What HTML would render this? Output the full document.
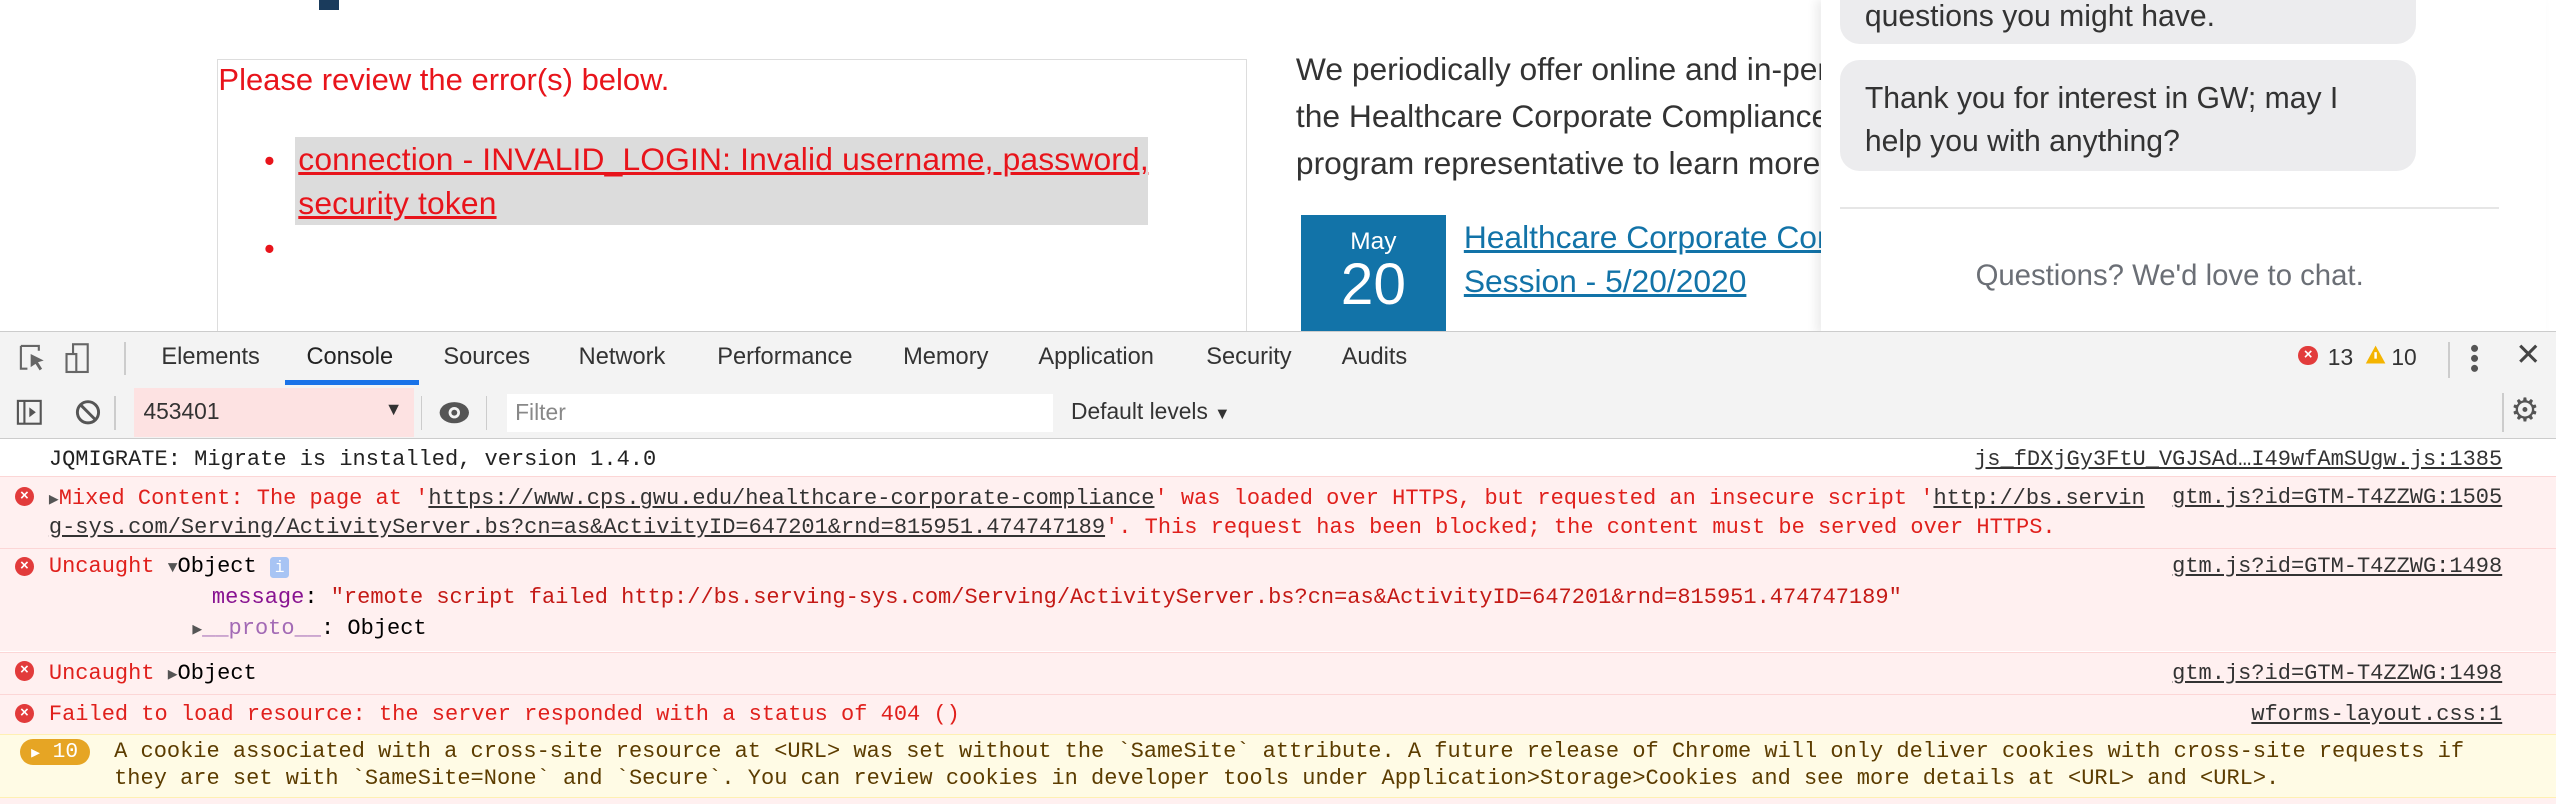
<!DOCTYPE html>
<html><head><meta charset="utf-8"><style>
html,body{margin:0;padding:0;width:2556px;height:804px;overflow:hidden;background:#fff}
#w{zoom:1.6301;width:1568px;height:493px;position:relative;overflow:hidden;font-family:"Liberation Sans",sans-serif}
.a{position:absolute;white-space:nowrap}
.m{font-family:"Liberation Mono",monospace;font-size:13.5px}
.tab{position:absolute;top:211px;font-size:14.5px;color:#333}
.row{position:absolute;left:0;width:1568px;background:#fff0f0;border-top:1px solid #fcd6d6}
.ei{position:absolute;left:9px;width:12px;height:12px;border-radius:50%;background:#e23b3b;color:#fff;font-size:9px;line-height:12px;text-align:center;font-family:"Liberation Sans",sans-serif;font-weight:bold}
.red{color:#e0201c}
.lnk{position:absolute;right:33px;color:#333;text-decoration:underline}
</style></head><body><div id="w">
<div class="a" style="left:196px;top:0;width:12px;height:6px;background:#1a3b5c"></div>
<div class="a" style="left:133px;top:36px;width:631px;height:170px;border:1px solid #ddd;border-bottom:none"></div>
<div class="a" style="left:134px;top:38px;font-size:19px;color:#e8141b">Please review the error(s) below.</div>
<div class="a" style="left:181px;top:84px;width:523px;height:54px;background:#dcdcdc"></div>
<div class="a" style="left:162px;top:86px;font-size:18.5px;color:#e8141b;line-height:27px">•<br><br>•</div>
<div class="a" style="left:183px;top:84px;font-size:19.5px;color:#e8141b;line-height:27px;text-decoration:underline;letter-spacing:0.1px">connection - INVALID_LOGIN: Invalid username, password,<br>security token</div>
<div class="a" style="left:795px;top:28px;font-size:19.5px;color:#333;line-height:29px">We periodically offer online and in-person<br>the Healthcare Corporate Compliance<br>program representative to learn more</div>
<div class="a" style="left:798px;top:132px;width:89px;height:75px;background:#1273a8;color:#fff;text-align:center">
<div style="font-size:15px;margin-top:8px">May</div><div style="font-size:36px;line-height:36px">20</div></div>
<div class="a" style="left:898px;top:132px;font-size:19.5px;color:#1273a8;line-height:27px;text-decoration:underline">Healthcare Corporate Compliance<br>Session - 5/20/2020</div>
<div class="a" style="left:1117px;top:0;width:445px;height:205px;background:#fff;box-shadow:-3px 0 6px rgba(0,0,0,.08)">
<div class="a" style="left:12px;top:-20px;width:353px;height:47px;background:#ececee;border-radius:12px"></div>
<div class="a" style="left:27px;top:0px;font-size:18.5px;color:#333">questions you might have.</div>
<div class="a" style="left:12px;top:37px;width:353px;height:68px;background:#ececee;border-radius:12px"></div>
<div class="a" style="left:27px;top:48px;font-size:18.5px;color:#333;line-height:26px">Thank you for interest in GW; may I<br>help you with anything?</div>
<div class="a" style="left:12px;top:127px;width:404px;height:1px;background:#e6e6e6"></div>
<div class="a" style="left:0;width:428px;text-align:center;top:159px;font-size:18px;color:#6b6f76">Questions? We'd love to chat.</div>
</div>
<!-- devtools -->
<div class="a" style="left:0;top:203px;width:1568px;height:290px;background:#fff"></div>
<div class="a" style="left:0;top:203px;width:1568px;height:33px;background:#f3f3f3;border-top:1px solid #ccc;border-bottom:1px solid #ccc"></div>
<svg class="a" style="left:10px;top:209px" width="60" height="22" viewBox="0 0 60 22"><path d="M3 3h11v3M3 3v14h4" fill="none" stroke="#666" stroke-width="1.3"/><path d="M9 8l8 4-3.5 1 2.5 4-1.5 1-2.5-4-3 2z" fill="#666"/><rect x="35" y="2" width="9" height="17" fill="none" stroke="#666" stroke-width="1.3"/><rect x="31" y="8" width="6" height="11" fill="#f3f3f3" stroke="#666" stroke-width="1.3"/></svg>
<div class="a" style="left:76px;top:210px;width:1px;height:20px;background:#ccc"></div>
<div class="tab" style="left:99px">Elements</div>
<div class="tab" style="left:188px;color:#222">Console</div>
<div class="a" style="left:175px;top:233px;width:82px;height:3px;background:#1a73e8"></div>
<div class="tab" style="left:272px">Sources</div>
<div class="tab" style="left:355px">Network</div>
<div class="tab" style="left:440px">Performance</div>
<div class="tab" style="left:554px">Memory</div>
<div class="tab" style="left:637px">Application</div>
<div class="tab" style="left:740px">Security</div>
<div class="tab" style="left:823px">Audits</div>
<div class="ei" style="left:1410px;top:212px">×</div>
<div class="a" style="left:1428px;top:211px;font-size:14px;color:#333">13</div>
<svg class="a" style="left:1451px;top:211px" width="13" height="13"><path d="M6.5 1L12.5 12H.5z" fill="#f4b400"/><path d="M6.5 5v4" stroke="#fff" stroke-width="1.5"/></svg>
<div class="a" style="left:1467px;top:211px;font-size:14px;color:#333">10</div>
<div class="a" style="left:1502px;top:210px;width:1px;height:22px;background:#ccc"></div>
<div class="a" style="left:1515px;top:211px;width:4px;line-height:6px;font-size:10px;color:#555">●<br>●<br>●</div>
<div class="a" style="left:1543px;top:207px;font-size:19px;color:#444">✕</div>
<div class="a" style="left:0;top:237px;width:1568px;height:32px;background:#f3f3f3;border-bottom:1px solid #ccc"></div>
<svg class="a" style="left:8px;top:243px" width="60" height="20"><rect x="3" y="3" width="14" height="14" fill="none" stroke="#555" stroke-width="1.3"/><path d="M7 3v14" stroke="#555" stroke-width="1.3"/><path d="M10 7l4 3-4 3z" fill="#555"/><circle cx="46" cy="10" r="6.5" fill="none" stroke="#555" stroke-width="1.8"/><path d="M41.5 5.5l9 9" stroke="#555" stroke-width="1.8"/></svg>
<div class="a" style="left:70px;top:243px;width:1px;height:21px;background:#ccc"></div>
<div class="a" style="left:82px;top:238px;width:172px;height:30px;background:#fde2e2"></div>
<div class="a" style="left:88px;top:244px;font-size:14px;color:#333">453401</div>
<div class="a" style="left:236px;top:245px;font-size:11px;color:#333">▼</div>
<div class="a" style="left:258px;top:243px;width:1px;height:21px;background:#ccc"></div>
<svg class="a" style="left:269px;top:244px" width="20" height="18"><ellipse cx="10" cy="9" rx="9" ry="6.5" fill="#555"/><circle cx="10" cy="9" r="3.5" fill="#f3f3f3"/><circle cx="10" cy="9" r="1.8" fill="#555"/></svg>
<div class="a" style="left:298px;top:243px;width:1px;height:21px;background:#ccc"></div>
<div class="a" style="left:311px;top:242px;width:335px;height:23px;background:#fff"></div>
<div class="a" style="left:316px;top:245px;font-size:14px;color:#888">Filter</div>
<div class="a" style="left:657px;top:244px;font-size:14px;color:#333">Default levels <span style="font-size:10px">▼</span></div>
<div class="a" style="left:1535px;top:241px;width:1px;height:24px;background:#ccc"></div>
<div class="a" style="left:1540px;top:240px;font-size:20px;color:#555">⚙</div>
<!-- messages -->
<div class="a m" style="left:30px;top:274px;color:#222">JQMIGRATE: Migrate is installed, version 1.4.0</div>
<div class="a m lnk" style="top:274px">js_fDXjGy3FtU_VGJSAd…I49wfAmSUgw.js:1385</div>
<div class="row m" style="top:292px;height:44px">
<div class="ei" style="top:6px">×</div>
<div class="a" style="left:30px;top:5px;line-height:17px"><span style="color:#555;font-size:10px">▶</span><span class="red">Mixed Content: The page at '<u style="color:#333">https://www.cps.gwu.edu/healthcare-corporate-compliance</u>' was loaded over HTTPS, but requested an insecure script '<u style="color:#333">http://bs.servin</u></span><br><span class="red"><u style="color:#333">g-sys.com/Serving/ActivityServer.bs?cn=as&amp;ActivityID=647201&amp;rnd=815951.474747189</u>'. This request has been blocked; the content must be served over HTTPS.</span></div>
<div class="lnk" style="top:5px">gtm.js?id=GTM-T4ZZWG:1505</div></div>
<div class="row m" style="top:336px;height:63px">
<div class="ei" style="top:5px">×</div>
<div class="a" style="left:30px;top:3px"><span class="red">Uncaught</span> <span style="font-size:10px;color:#555">▼</span>Object <span style="display:inline-block;width:12px;height:13px;background:#a8c4f4;color:#fff;font-size:10px;text-align:center;line-height:13px;border-radius:2px">i</span></div>
<div class="a" style="left:130px;top:22px"><span style="color:#881391">message</span>: <span style="color:#c41a16">"remote script failed http://bs.serving-sys.com/Serving/ActivityServer.bs?cn=as&amp;ActivityID=647201&amp;rnd=815951.474747189"</span></div>
<div class="a" style="left:118px;top:41px"><span style="font-size:10px;color:#555">▶</span><span style="color:#a36ab5">__proto__</span>: Object</div>
<div class="lnk" style="top:3px">gtm.js?id=GTM-T4ZZWG:1498</div></div>
<div class="row m" style="top:400px;height:26px">
<div class="ei" style="top:5px">×</div>
<div class="a" style="left:30px;top:5px"><span class="red">Uncaught</span> <span style="font-size:10px;color:#555">▶</span>Object</div>
<div class="lnk" style="top:5px">gtm.js?id=GTM-T4ZZWG:1498</div></div>
<div class="row m" style="top:426px;height:24px">
<div class="ei" style="top:5px">×</div>
<div class="a red" style="left:30px;top:4px">Failed to load resource: the server responded with a status of 404 ()</div>
<div class="lnk" style="top:4px">wforms-layout.css:1</div></div>
<div class="row m" style="top:450px;height:39px;background:#fffbe5;border-top:1px solid #fff0b3">
<div class="a" style="left:12px;top:3px;width:43px;height:16px;background:#e6a524;border-radius:8px;color:#fff;font-size:13px;line-height:16px;text-align:center"><span style="font-size:9px">▶</span> 10</div>
<div class="a" style="left:70px;top:3px;line-height:16.5px;color:#5c3c00">A cookie associated with a cross-site resource at &lt;URL&gt; was set without the `SameSite` attribute. A future release of Chrome will only deliver cookies with cross-site requests if<br>they are set with `SameSite=None` and `Secure`. You can review cookies in developer tools under Application&gt;Storage&gt;Cookies and see more details at &lt;URL&gt; and &lt;URL&gt;.</div></div>
<div class="row" style="top:489px;height:4px;border-top:1px solid #fff0b3"></div>
</div></body></html>
